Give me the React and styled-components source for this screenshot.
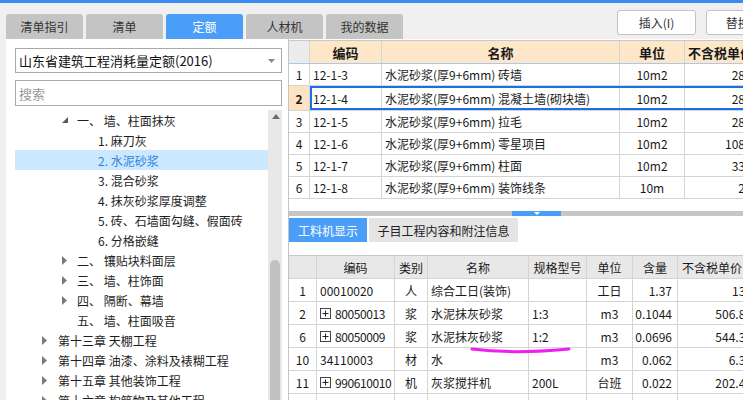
import React from "react";
import styled, { createGlobalStyle } from "styled-components";

const GlobalStyle = createGlobalStyle`
  html, body {
    margin: 0;
    padding: 0;
    background: #f0f0f0;
  }
  body {
    font-family: "Noto Sans CJK SC", "Noto Sans", sans-serif;
    font-size: 12px;
    color: #222;
    overflow: hidden;
  }
  * {
    box-sizing: border-box;
  }
`;

const Page = styled.div`
  position: relative;
  width: 743px;
  height: 400px;
  border-top: 3px solid #3b8cf0;
  background: #f0f0f0;
  display: flex;
  flex-direction: column;
  overflow: hidden;
`;

// ---------- top bar ----------
const TopBar = styled.div`
  height: 36px;
  flex-shrink: 0;
  display: flex;
  padding-left: 6px;
`;

const Tabs = styled.div`
  display: flex;
  gap: 3px;
  align-self: flex-end;
`;

const Tab = styled.div`
  width: 77px;
  height: 25px;
  border-radius: 3px 3px 0 0;
  display: flex;
  align-items: center;
  justify-content: center;
  font-size: 12px;
  color: ${(p) => (p.$active ? "#fff" : "#333")};
  background: ${(p) => (p.$active ? "#4a9ef7" : "#c4c4c4")};
`;

const Actions = styled.div`
  display: flex;
  gap: 10px;
  margin-left: 214px;
  margin-top: 7px;
`;

const Button = styled.div`
  flex-shrink: 0;
  width: 79px;
  height: 25px;
  border: 1px solid #c2c2c2;
  border-radius: 3px;
  background: #fff;
  display: flex;
  align-items: center;
  justify-content: center;
  color: #333;
  font-size: 12px;
`;

// ---------- main ----------
const Main = styled.div`
  flex: 1;
  display: flex;
  min-height: 0;
`;

const LeftPanel = styled.div`
  width: 282px;
  margin-left: 6px;
  flex-shrink: 0;
  background: #fff;
  padding: 9px 0 0 9px;
  display: flex;
  flex-direction: column;
`;

const SelectBox = styled.div`
  width: 267px;
  height: 25px;
  border: 1px solid #a9a9a9;
  display: flex;
  align-items: center;
  justify-content: space-between;
  padding: 0 6px 0 3px;
  font-size: 13px;
  color: #111;
`;

const SearchBox = styled.div`
  width: 267px;
  height: 26px;
  margin-top: 7px;
  border: 1px solid #a9a9a9;
  display: flex;
  align-items: center;
  padding-left: 3px;
  font-size: 13px;
  color: #9a9a9a;
`;

const TreeArea = styled.div`
  flex: 1;
  margin-top: 4px;
  display: flex;
  min-height: 0;
`;

const TreeList = styled.div`
  width: 253px;
  overflow: hidden;
`;

const TreeRow = styled.div`
  height: 20px;
  display: flex;
  align-items: center;
  padding-left: ${(p) => p.$indent}px;
  white-space: nowrap;
  font-size: 12px;
  color: ${(p) => (p.$selected ? "#2f82df" : "#1e1e1e")};
  background: ${(p) => (p.$selected ? "#cce8ff" : "transparent")};
`;

const Caret = styled.span`
  width: ${(p) => p.$w}px;
  flex-shrink: 0;
  display: flex;
  align-items: center;
`;

const ScrollTrack = styled.div`
  width: 14px;
  background: #e8e8e8;
  display: flex;
  flex-direction: column;
  align-items: center;
`;

const ScrollUp = styled.svg`
  margin-top: 4px;
  margin-left: 1px;
`;

const ScrollThumb = styled.div`
  width: 10px;
  height: 140px;
  margin-top: auto;
  border-radius: 5px 5px 0 0;
  background: #c1c1c1;
`;

const RightPanel = styled.div`
  flex: 1;
  min-width: 0;
  background: #fff;
  border-left: 1px solid #c4c4c4;
  display: flex;
  flex-direction: column;
  overflow: hidden;
`;

const TopGrid = styled.div`
  height: 168px;
  margin-top: 1px;
  flex-shrink: 0;
`;

const GridRow = styled.div`
  display: flex;
  height: ${(p) => p.$h}px;
  border-bottom: 1px solid ${(p) => p.$line || "#d4d4d4"};
  border-top: ${(p) => (p.$top ? "1px solid #c8c8c8" : "none")};
`;

const Cell = styled.div`
  width: ${(p) => p.$w}px;
  flex-shrink: 0;
  display: flex;
  align-items: center;
  justify-content: ${(p) =>
    p.$align === "right" ? "flex-end" : p.$align === "center" ? "center" : "flex-start"};
  padding: 0 ${(p) => (p.$align === "right" ? 5 : 3)}px 0 ${(p) => (p.$pl ?? 3)}px;
  border-right: 1px solid #d4d4d4;
  white-space: nowrap;
  overflow: hidden;
  font-size: ${(p) => (p.$head ? 13 : 12)}px;
  font-weight: ${(p) => (p.$bold ? 700 : 400)};
  color: #1a1a1a;
  background: ${(p) => p.$bg || "transparent"};
`;

const DataGroup = styled.div`
  display: flex;
  outline: ${(p) => (p.$active ? "2px solid #1b6fe7" : "none")};
  outline-offset: -2px;
`;

const Splitter = styled.div`
  flex-shrink: 0;
  padding: 3px 0 2px;
`;

const SplitBar = styled.div`
  height: 5px;
  background: #c6c6c6;
  display: flex;
  padding-left: 223px;
`;

const SplitNotch = styled.div`
  width: 49px;
  background: #4a9ef7;
  display: flex;
  justify-content: center;
  align-items: center;
`;

const SubTabs = styled.div`
  display: flex;
  gap: 2px;
  height: 24px;
  flex-shrink: 0;
`;

const SubTab = styled.div`
  width: ${(p) => p.$w}px;
  display: flex;
  align-items: center;
  justify-content: center;
  font-size: 12px;
  color: ${(p) => (p.$active ? "#fff" : "#222")};
  background: ${(p) => (p.$active ? "#4a9ef7" : "#e4e4e4")};
`;

const BottomGrid = styled.div`
  margin-top: 13px;
`;

const CodeWrap = styled.span`
  display: flex;
  align-items: center;
  gap: 4px;
  letter-spacing: -0.4px;
`;

const Scribble = styled.svg`
  position: absolute;
  left: 468px;
  top: 342px;
  pointer-events: none;
`;

// ---------- data ----------
const TREE = [
  { kind: "sec", open: true, label: "一、 墙、柱面抹灰" },
  { kind: "item", label: "1. 麻刀灰" },
  { kind: "item", label: "2. 水泥砂浆", selected: true },
  { kind: "item", label: "3. 混合砂浆" },
  { kind: "item", label: "4. 抹灰砂浆厚度调整" },
  { kind: "item", label: "5. 砖、石墙面勾缝、假面砖" },
  { kind: "item", label: "6. 分格嵌缝" },
  { kind: "sec", closed: true, label: "二、 镶贴块料面层" },
  { kind: "sec", closed: true, label: "三、 墙、柱饰面" },
  { kind: "sec", closed: true, label: "四、 隔断、幕墙" },
  { kind: "sec", label: "五、 墙、柱面吸音" },
  { kind: "chap", closed: true, label: "第十三章 天棚工程" },
  { kind: "chap", closed: true, label: "第十四章 油漆、涂料及裱糊工程" },
  { kind: "chap", closed: true, label: "第十五章 其他装饰工程" },
  { kind: "chap", closed: true, label: "第十六章 构筑物及其他工程" },
];

const TOP_COLS = [21, 72, 238, 65, 96];
const QUOTAS = [
  ["1", "12-1-3", "水泥砂浆(厚9+6mm) 砖墙", "10m2", "2845.61"],
  ["2", "12-1-4", "水泥砂浆(厚9+6mm) 混凝土墙(砌块墙)", "10m2", "2878.90"],
  ["3", "12-1-5", "水泥砂浆(厚9+6mm) 拉毛", "10m2", "2863.20"],
  ["4", "12-1-6", "水泥砂浆(厚9+6mm) 零星项目", "10m2", "10862.45"],
  ["5", "12-1-7", "水泥砂浆(厚9+6mm) 柱面", "10m2", "3325.17"],
  ["6", "12-1-8", "水泥砂浆(厚9+6mm) 装饰线条", "10m", "254.87"],
];

const BOTTOM_COLS = [28, 78, 33, 101, 58, 46, 45, 80];
const BOTTOM_HEAD = ["", "编码", "类别", "名称", "规格型号", "单位", "含量", "不含税单价"];
const BOTTOM_ALIGN = ["center", "left", "center", "left", "left", "center", "right", "right"];
const RESOURCES = [
  ["1", "00010020", "人", "综合工日(装饰)", "", "工日", "1.37", "138", false],
  ["2", "80050013", "浆", "水泥抹灰砂浆", "1:3", "m3", "0.1044", "506.88", true],
  ["6", "80050009", "浆", "水泥抹灰砂浆", "1:2", "m3", "0.0696", "544.36", true],
  ["10", "34110003", "材", "水", "", "m3", "0.062", "6.36", false],
  ["11", "990610010", "机", "灰浆搅拌机", "200L", "台班", "0.022", "202.44", true],
  ["", "", "", "", "", "", "", "", false],
];

// ---------- icons ----------
const Expanded = () => (
  <svg width="6" height="6" viewBox="0 0 6 6">
    <polygon points="6,0 6,6 0,6" fill="#5a5a5a" />
  </svg>
);

const Collapsed = () => (
  <svg width="5" height="9" viewBox="0 0 5 9">
    <polygon points="0,0 5,4.5 0,9" fill="#7a7a7a" />
  </svg>
);

const PlusBox = () => (
  <svg width="11" height="11" viewBox="0 0 11 11">
    <rect x="0.5" y="0.5" width="10" height="10" fill="#fff" stroke="#444" />
    <path d="M2.5 5.5h6M5.5 2.5v6" stroke="#222" />
  </svg>
);

function TreeItem({ node }) {
  const indent = node.kind === "chap" ? 27 : node.kind === "sec" ? 47 : 83;
  return (
    <TreeRow $indent={indent} $selected={node.selected}>
      {node.kind !== "item" && (
        <Caret $w={node.kind === "chap" ? 16 : 15}>
          {node.open && <Expanded />}
          {node.closed && <Collapsed />}
        </Caret>
      )}
      {node.label}
    </TreeRow>
  );
}

export default function App() {
  return (
    <>
      <GlobalStyle />
      <Page>
        <TopBar>
          <Tabs>
            <Tab>清单指引</Tab>
            <Tab>清单</Tab>
            <Tab $active>定额</Tab>
            <Tab>人材机</Tab>
            <Tab>我的数据</Tab>
          </Tabs>
          <Actions>
            <Button>插入(I)</Button>
            <Button>替换(R)</Button>
          </Actions>
        </TopBar>

        <Main>
          <LeftPanel>
            <SelectBox>
              山东省建筑工程消耗量定额(2016)
              <svg width="7" height="4" viewBox="0 0 7 4">
                <polygon points="0,0 7,0 3.5,4" fill="#8a8a8a" />
              </svg>
            </SelectBox>
            <SearchBox>搜索</SearchBox>
            <TreeArea>
              <TreeList>
                {TREE.map((node, i) => (
                  <TreeItem key={i} node={node} />
                ))}
              </TreeList>
              <ScrollTrack>
                <ScrollUp width="8" height="5" viewBox="0 0 8 5">
                  <polygon points="4,0 8,5 0,5" fill="#6e6e6e" />
                </ScrollUp>
                <ScrollThumb />
              </ScrollTrack>
            </TreeArea>
          </LeftPanel>

          <RightPanel>
            <TopGrid>
              <GridRow $h={24} $line="#a9c9ef" $top>
                <Cell $w={TOP_COLS[0]} $bg="#ececec" />
                <Cell $w={TOP_COLS[1]} $bg="#fde7c8" $align="center" $head $bold>编码</Cell>
                <Cell $w={TOP_COLS[2]} $bg="#fde7c8" $align="center" $head $bold>名称</Cell>
                <Cell $w={TOP_COLS[3]} $bg="#fde7c8" $align="center" $head $bold>单位</Cell>
                <Cell $w={TOP_COLS[4]} $bg="#fde7c8" $head $bold>不含税单价</Cell>
              </GridRow>
              {QUOTAS.map((row) => {
                const active = row[0] === "2";
                return (
                  <GridRow key={row[0]} $h={active ? 25 : 22}>
                    <Cell
                      $w={TOP_COLS[0]}
                      $align="center"
                      $bold={active}
                      $bg={active ? "#fde3c2" : "transparent"}
                    >
                      {row[0]}
                    </Cell>
                    <DataGroup $active={active}>
                      <Cell $w={TOP_COLS[1]}>{row[1]}</Cell>
                      <Cell $w={TOP_COLS[2]}>{row[2]}</Cell>
                      <Cell $w={TOP_COLS[3]} $align="center">{row[3]}</Cell>
                      <Cell $w={TOP_COLS[4]} $align="right">{row[4]}</Cell>
                    </DataGroup>
                  </GridRow>
                );
              })}
            </TopGrid>

            <Splitter>
              <SplitBar>
                <SplitNotch>
                  <svg width="6" height="3" viewBox="0 0 6 3">
                    <polygon points="0,0 6,0 3,3" fill="#fff" />
                  </svg>
                </SplitNotch>
              </SplitBar>
            </Splitter>

            <SubTabs>
              <SubTab $w={78} $active>工料机显示</SubTab>
              <SubTab $w={149}>子目工程内容和附注信息</SubTab>
            </SubTabs>

            <BottomGrid>
              <GridRow $h={24} $top>
                {BOTTOM_HEAD.map((h, i) => (
                  <Cell
                    key={i}
                    $w={BOTTOM_COLS[i]}
                    $bg="#e8e8e8"
                    $align={i === 7 ? "left" : "center"}
                    $pl={i === 7 ? 4 : 3}
                  >
                    {h}
                  </Cell>
                ))}
              </GridRow>
              {RESOURCES.map((row, r) => (
                <GridRow key={r} $h={23}>
                  {row.slice(0, 8).map((v, i) => (
                    <Cell key={i} $w={BOTTOM_COLS[i]} $align={BOTTOM_ALIGN[i]}>
                      {i === 1 && row[8] ? (
                        <CodeWrap>
                          <PlusBox />
                          {v}
                        </CodeWrap>
                      ) : (
                        v
                      )}
                    </Cell>
                  ))}
                </GridRow>
              ))}
            </BottomGrid>
          </RightPanel>
        </Main>

        <Scribble width="106" height="12" viewBox="0 0 106 12">
          <path
            d="M4 4 C 20 6, 40 7, 60 6.5 S 92 5, 101 4"
            stroke="#f01ef0"
            strokeWidth="3"
            fill="none"
            strokeLinecap="round"
          />
        </Scribble>
      </Page>
    </>
  );
}
